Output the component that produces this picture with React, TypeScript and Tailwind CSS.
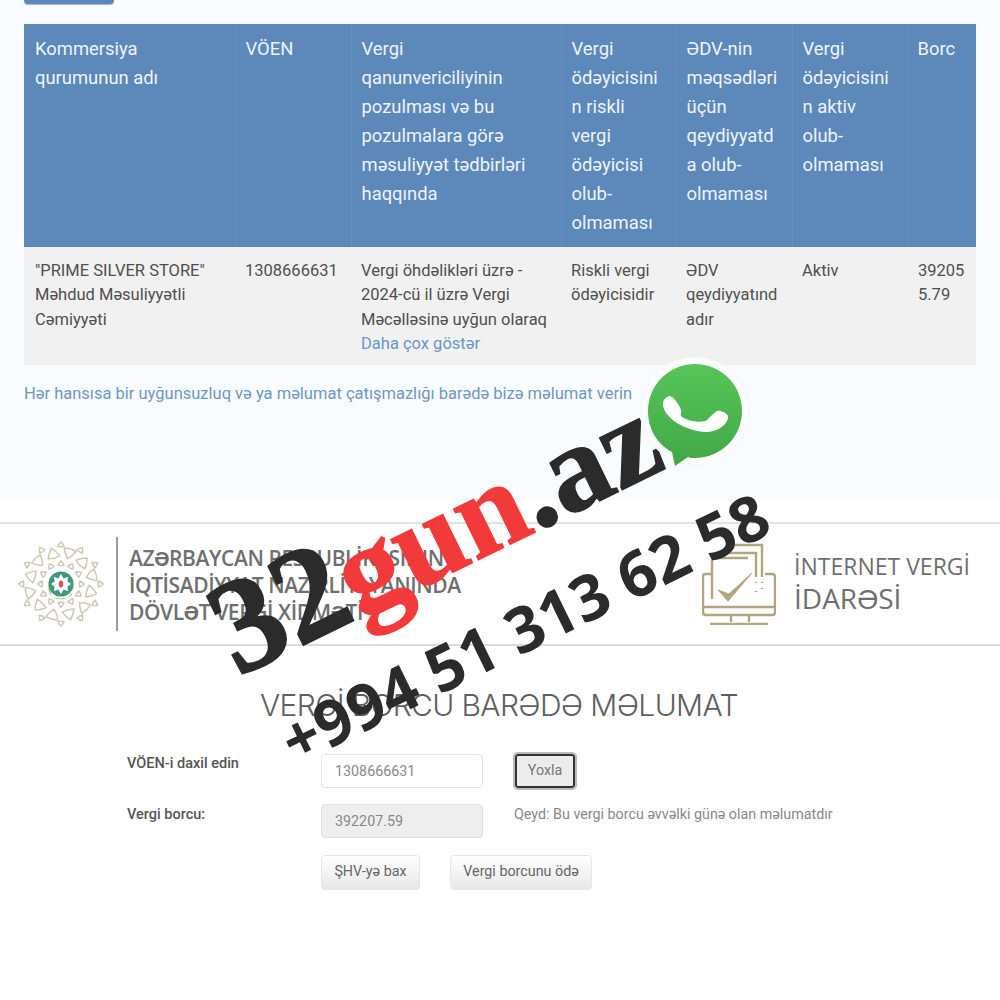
import React from "react";

const headers: React.ReactNode[] = [
  <>Kommersiya<br />qurumunun adı</>,
  "VÖEN",
  <>Vergi<br />qanunvericiliyinin pozulması və bu pozulmalara görə məsuliyyət tədbirləri haqqında</>,
  <>Vergi ödəyicisinin riskli<br />vergi ödəyicisi olub-olmaması</>,
  "ƏDV-nin məqsədləri üçün qeydiyyatda olub-olmaması",
  "Vergi ödəyicisinin aktiv olub-olmaması",
  "Borc",
];
const widths = [211, 116, 210, 115, 116, 115, 69];

function Tri({ a, r, s, flip }: { a: number; r: number; s: number; flip?: boolean }) {
  const rad = (a * Math.PI) / 180;
  const x = 50 + r * Math.cos(rad);
  const y = 50 + r * Math.sin(rad);
  return (
    <path
      transform={`translate(${x} ${y}) rotate(${a + (flip ? 180 : 0) + 90}) scale(${s})`}
      d="M0 -4 Q3 -1 4.5 3 Q0 4.2 -4.5 3 Q-3 -1 0 -4 Z"
      fill="none"
      stroke="#cfc9b6"
      strokeWidth={1.7 / s}
      strokeLinejoin="round"
    />
  );
}

function Emblem() {
  const outer = Array.from({ length: 12 }, (_, i) => i * 30 - 90);
  const mid = Array.from({ length: 12 }, (_, i) => i * 30 - 75);
  return (
    <svg viewBox="0 0 100 100" className="w-[90px] h-[90px] shrink-0">
      {outer.map((a) => <Tri key={a} a={a} r={44} s={0.75} />)}
      {mid.map((a, i) => <Tri key={a} a={a} r={35} s={1.5} flip={i % 2 === 0} />)}
      {outer.map((a) => <Tri key={`m${a}`} a={a} r={23} s={0.72} />)}
      <circle cx="50" cy="50" r="14" fill="#3f9a7c" />
      <path d="M36 53 A14 14 0 0 0 64 53 L62 62 Q50 70 40 63 Z" fill="#8f9a2c" />
      <path
        d="M50 39 L53 44 L58 42 L57 47 L61 50 L57 53 L58 58 L53 56 L50 61 L47 56 L42 58 L43 53 L39 50 L43 47 L42 42 L47 44 Z"
        fill="#fff"
      />
      <ellipse cx="50" cy="50" rx="2.6" ry="4" fill="#d9535c" />
    </svg>
  );
}

function Monitor() {
  return (
    <svg viewBox="0 0 74 84" className="w-[74px] h-[84px] shrink-0" fill="none" stroke="#b3a57f" strokeWidth="2.4">
      <path d="M10 19 V58" />
      <path d="M10 17 H46" />
      <path d="M17 12 H54 V36" />
      <path d="M24 4 H60 V36" />
      <path d="M10 33 H3 Q1 33 1 36 V71 Q1 74 4 74 H70 Q73 74 73 71 V36 Q73 33 70 33 H63" />
      <path d="M1 66 H73" />
      <path d="M29 74 V81 M47 74 V81" />
      <path d="M8 83 H66" strokeWidth="2.6" />
      <path d="M16 49 L26 60 L50 32 L27 53 Z" fill="#b3a57f" strokeWidth="1" />
      <path d="M54 41 V42 M60 41 V42 M60 47 V48 M54 50 V51" strokeWidth="2.6" />
    </svg>
  );
}

function WhatsApp() {
  return (
    <svg viewBox="0 0 110 116" className="w-[110px] h-[116px]">
      <defs>
        <linearGradient id="wa" x1="0" y1="0" x2="0" y2="1">
          <stop offset="0" stopColor="#57c559" />
          <stop offset="1" stopColor="#41a746" />
        </linearGradient>
      </defs>
      <circle cx="55" cy="55" r="54" fill="#fbfdff" stroke="#f3f6f8" />
      <path
        d="M55 8 C81 8 102 29 102 55 C102 81 81 102 55 102 C52 102 50 102 48 101 L35 110 L32 96 C17 88 8 73 8 55 C8 29 29 8 55 8 Z"
        fill="url(#wa)"
      />
      <path
        d="M23 47 C24 42 29 39 32 41 C35 43 40 50 41 54 C42 57 40 59 41 60 C46 64 56 67 65 65 C68 64 72 58 77 55 C80 54 87 57 88 60 C89 66 80 76 66 76 C48 76 22 62 23 47 Z"
        fill="#fff"
      />
    </svg>
  );
}

export default function App() {
  return (
    <div className="relative w-[1000px] h-[1000px] overflow-hidden bg-white font-['Roboto',sans-serif]">
      <section className="h-[500px] bg-[#f9fcff] px-6">
        <div className="h-1 w-[90px] rounded-b bg-[#5a87b9] shadow-[0_1px_1px_rgba(0,0,0,0.3)]" />
        <table className="mt-5 w-[952px] table-fixed border-collapse">
          <colgroup>
            {widths.map((w, i) => <col key={i} style={{ width: w }} />)}
          </colgroup>
          <thead>
            <tr className="h-[223px] bg-[#5d88ba] align-top text-[18.4px] leading-[29px] text-[#eef3f8]">
              {headers.map((h, i) => (
                <th key={i} className={`pl-[10px] pr-[11px] pt-[10px] text-left font-normal break-words first:pl-[11px] ${i < 6 ? "border-r border-[#6690c0]" : ""}`}>
                  {h}
                </th>
              ))}
            </tr>
          </thead>
          <tbody>
            <tr className="h-[118px] bg-[#f1f1f1] align-top text-[16.5px] leading-[24.3px] text-[#4f4f4f]">
              <td className="pl-[11px] pr-[11px] pt-[12px]">"PRIME SILVER STORE" Məhdud Məsuliyyətli Cəmiyyəti</td>
              <td className="pl-[10px] pr-[11px] pt-[12px]">1308666631</td>
              <td className="pl-[10px] pr-[11px] pt-[12px]">
                Vergi öhdəlikləri üzrə - 2024-cü il üzrə Vergi Məcəlləsinə uyğun olaraq{" "}
                <span className="text-[#6a96c5]">Daha çox göstər</span>
              </td>
              <td className="pl-[10px] pr-[11px] pt-[12px]">Riskli vergi ödəyicisidir</td>
              <td className="pl-[10px] pr-[11px] pt-[12px] break-words">ƏDV qeydiyyatındadır</td>
              <td className="pl-[10px] pr-[11px] pt-[12px]">Aktiv</td>
              <td className="pl-[11px] pr-[10px] pt-[12px] break-words">392055.79</td>
            </tr>
          </tbody>
        </table>
        <p className="mt-[17px] text-[16.5px] leading-[24px] text-[#6d97c2]">
          Hər hansısa bir uyğunsuzluq və ya məlumat çatışmazlığı barədə bizə məlumat verin
        </p>
      </section>

      <header className="mt-[22px] flex h-[124px] items-center border-y-2 border-t-[#dfe3ea] border-b-[#dcdcd2] pl-[16px] pr-[30px]">
        <Emblem />
        <div className="ml-[10px] h-[94px] w-[2px] bg-[#9a9a9a]" />
        <div className="ml-[11px] text-[21px] font-semibold leading-[27px] text-[#6f6f6f] font-['Open_Sans',sans-serif] tracking-[-0.4px] mt-[2px]">
          <div>AZƏRBAYCAN RESPUBLİKASININ</div>
          <div>İQTİSADİYYAT NAZİRLİYİ YANINDA</div>
          <div>DÖVLƏT VERGİ XİDMƏTİ</div>
        </div>
        <div className="ml-auto mt-[-2px]"><Monitor /></div>
        <div className="ml-[18px] font-['Open_Sans',sans-serif] font-medium text-[#6f6f6f] mt-[-4px]">
          <div className="text-[23px] leading-[32px]">İNTERNET VERGİ</div>
          <div className="text-[28px] leading-[32px]">İDARƏSİ</div>
        </div>
      </header>

      <main className="pl-[127px]">
        <h1 className="mt-[39px] ml-[133px] text-[30px] leading-[40px] tracking-[-0.65px] text-[#5f5f5f] font-['Inter',sans-serif] font-light whitespace-nowrap">
          VERGİ BORCU BARƏDƏ MƏLUMAT
        </h1>
        <div className="mt-[29px] grid grid-cols-[194px_162px_1fr] gap-y-[16px] text-[14.3px]">
          <label className="mt-[1px] text-[14.5px] font-medium leading-[18px] text-[#555]">VÖEN-i daxil edin</label>
          <div className="flex h-[34px] items-center rounded border border-[#e3e3e3] bg-white pl-[13px] pt-[1px] text-[#888]">1308666631</div>
          <div className="ml-[32px]">
            <button className="h-[34px] w-[60px] rounded-[3px] border-2 border-[#333] bg-[#ececec] text-[#777] outline-2 outline-[#bbb]">Yoxla</button>
          </div>
          <label className="mt-[2px] text-[14.5px] font-medium leading-[18px] text-[#555]">Vergi borcu:</label>
          <div className="flex h-[34px] items-center rounded border border-[#e0e0e0] bg-[#eeeeee] pl-[13px] pt-[1px] text-[#888]">392207.59</div>
          <div className="ml-[31px] mt-[1px] leading-[18px] text-[#888]">Qeyd: Bu vergi borcu əvvəlki günə olan məlumatdır</div>
        </div>
        <div className="ml-[194px] mt-[17px] flex gap-[30px] text-[14.3px] text-[#666]">
          <button className="h-[35px] w-[99px] rounded border border-[#e6e6e6] bg-linear-to-b from-white to-[#e8e8e8] pb-[1px]">ŞHV-yə bax</button>
          <button className="h-[35px] w-[142px] rounded border border-[#e6e6e6] bg-linear-to-b from-white to-[#e8e8e8] pb-[1px]">Vergi borcunu ödə</button>
        </div>
      </main>

      <div className="absolute left-[248px] top-[565px] origin-bottom-left -rotate-[26deg] whitespace-nowrap font-['Liberation_Serif',serif] text-[123px] font-bold leading-[130px] text-[#2b2b2b] [-webkit-text-stroke:1.5px_currentColor]">
        <span className="text-[135px]">32</span><span className="text-[#f23a3a]">gun</span>.az
      </div>
      <div className="absolute left-[640px] top-[356px]"><WhatsApp /></div>
      <div className="absolute left-[302px] top-[700px] origin-bottom-left -rotate-[26deg] whitespace-nowrap font-['Open_Sans',sans-serif] text-[63px] font-bold leading-[80px] text-[#2b2b2b]">
        +994 51 313 62 58
      </div>
    </div>
  );
}
